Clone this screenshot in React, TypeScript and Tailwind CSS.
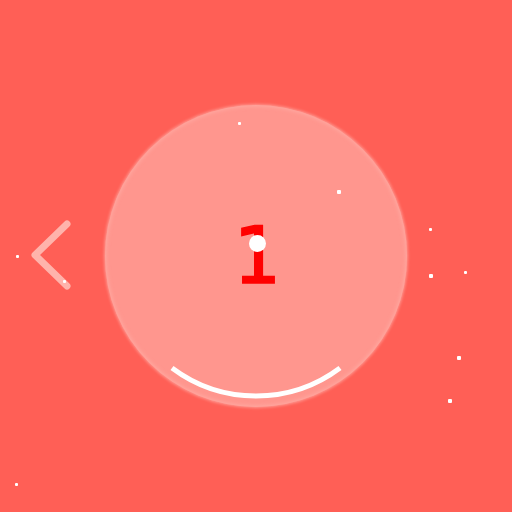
import React from 'react';

const dots = [
  { x: 239, y: 123, s: 3 },
  { x: 339, y: 192, s: 4 },
  { x: 430, y: 229, s: 3 },
  { x: 431, y: 276, s: 4 },
  { x: 465, y: 272, s: 3 },
  { x: 459, y: 358, s: 4 },
  { x: 450, y: 401, s: 4 },
  { x: 17, y: 256, s: 3 },
  { x: 16, y: 484, s: 3 },
  { x: 64, y: 281, s: 3 },
];

export default function App() {
  return (
    <div className="relative w-full h-screen bg-[#ff5f56] overflow-hidden flex items-center justify-center">
      {/* Back chevron */}
      <button className="absolute left-[26px] top-[218px] w-[50px] h-[74px]">
        <svg width="50" height="74" viewBox="0 0 50 74">
          <polyline
            points="41,6 9,37 41,68"
            fill="none"
            stroke="#ffb3ab"
            strokeWidth="7"
            strokeLinecap="round"
            strokeLinejoin="round"
          />
        </svg>
      </button>

      {/* Main dial */}
      <div className="relative w-[302px] h-[302px] -mt-[1px] rounded-full bg-[#ff968e] shadow-[0_0_3px_1px_rgba(255,160,152,0.9),inset_0_0_4px_1px_rgba(255,175,168,0.8)] flex items-center justify-center">
        <span
          className="text-[#ff0000] text-[78px] leading-none [-webkit-text-stroke:1.5px_#ff0000]"
          style={{ fontFamily: '"DejaVu Sans Mono", monospace' }}
        >
          1
        </span>
        <div className="absolute left-[144px] top-[130px] w-[17px] h-[17px] rounded-full bg-white" />
        <svg className="absolute inset-0" width="302" height="302" viewBox="0 0 302 302">
          <path
            d="M 67 263 A 140 140 0 0 0 235 263"
            fill="none"
            stroke="#ffffff"
            strokeWidth="5"
          />
        </svg>
      </div>

      {/* Particles */}
      {dots.map((d, i) => (
        <div
          key={i}
          className="absolute z-10 bg-white rounded-[1px]"
          style={{ left: d.x - d.s / 2, top: d.y - d.s / 2, width: d.s, height: d.s }}
        />
      ))}
    </div>
  );
}
